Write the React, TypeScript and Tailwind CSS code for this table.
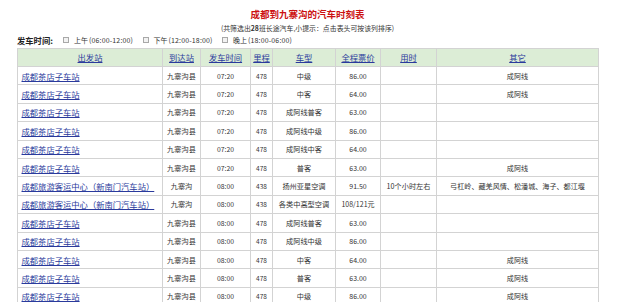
import React from "react";

type Row = {
  from: string;
  to: string;
  time: string;
  km: string;
  type: string;
  price: string;
  dur?: string;
  other?: string;
};

const CDZ = "成都茶店子车站";
const LY = "成都旅游客运中心（新南门汽车站）";

const rows: Row[] = [
  { from: CDZ, to: "九寨沟县", time: "07:20", km: "478", type: "中级", price: "86.00", other: "成阿线" },
  { from: CDZ, to: "九寨沟县", time: "07:20", km: "478", type: "中客", price: "64.00", other: "成阿线" },
  { from: CDZ, to: "九寨沟县", time: "07:20", km: "478", type: "成阿线普客", price: "63.00" },
  { from: CDZ, to: "九寨沟县", time: "07:20", km: "478", type: "成阿线中级", price: "86.00" },
  { from: CDZ, to: "九寨沟县", time: "07:20", km: "478", type: "成阿线中客", price: "64.00" },
  { from: CDZ, to: "九寨沟县", time: "07:20", km: "478", type: "普客", price: "63.00", other: "成阿线" },
  {
    from: LY,
    to: "九寨沟",
    time: "08:00",
    km: "438",
    type: "扬州亚星空调",
    price: "91.50",
    dur: "10个小时左右",
    other: "弓杠岭、藏羌风情、松潘城、海子、都江堰",
  },
  { from: LY, to: "九寨沟", time: "08:00", km: "438", type: "各类中高型空调", price: "108/121元" },
  { from: CDZ, to: "九寨沟县", time: "08:00", km: "478", type: "成阿线普客", price: "63.00" },
  { from: CDZ, to: "九寨沟县", time: "08:00", km: "478", type: "成阿线中级", price: "86.00" },
  { from: CDZ, to: "九寨沟县", time: "08:00", km: "478", type: "中客", price: "64.00", other: "成阿线" },
  { from: CDZ, to: "九寨沟县", time: "08:00", km: "478", type: "普客", price: "63.00", other: "成阿线" },
  { from: CDZ, to: "九寨沟县", time: "08:00", km: "478", type: "中级", price: "86.00", other: "成阿线" },
];

const headers = ["出发站", "到达站", "发车时间", "里程", "车型", "全程票价", "用时", "其它"];

const filters = [
  ["上午", "(06:00-12:00)"],
  ["下午", "(12:00-18:00)"],
  ["晚上", "(18:00-06:00)"],
];

export default function App() {
  return (
    <div
      className="w-[639px] h-[302px] overflow-hidden bg-white text-[#333]"
      style={{ fontFamily: '"Noto Sans CJK SC", "Noto Sans", sans-serif' }}
    >
      <div className="ml-[17px] w-[581px] pt-[9px]">
        <div className="h-[10px] leading-[10px] text-center text-[9.5px] font-bold text-[#cc1111]">
          成都到九寨沟的汽车时刻表
        </div>
        <div className="mt-[4px] h-[10px] leading-[10px] text-center text-[6.9px] text-[#333]">
          (共筛选出<span className="font-bold">28</span>班长途汽车,小提示：点击表头可按该列排序)
        </div>
        <div className="mt-[2px] h-[10px] leading-[10px] flex items-center text-[7px] text-[#333]">
          <span className="font-bold text-[8.3px] text-[#222] w-[46px]">发车时间:</span>
          {filters.map(([a, b]) => (
            <span key={a} className="w-[79.5px] flex items-center whitespace-nowrap">
              <span className="inline-block w-[6px] h-[6px] border border-[#a8a8a8] bg-[#f2f2f2] mr-[5px]" />
              <span>{a}</span>
              <span className="text-[7px] tracking-[0.15px] ml-[1px]">{b}</span>
            </span>
          ))}
        </div>
        <table className="mt-[2.5px] w-[581px] table-fixed border-collapse">
          <colgroup>
            <col className="w-[145px]" />
            <col className="w-[38px]" />
            <col className="w-[50px]" />
            <col className="w-[22px]" />
            <col className="w-[63px]" />
            <col className="w-[45px]" />
            <col className="w-[56px]" />
            <col className="w-[162px]" />
          </colgroup>
          <thead>
            <tr className="h-[18.5px] bg-[#dcedd6]">
              {headers.map((h) => (
                <th
                  key={h}
                  className="border border-[#d3d3d3] p-0 text-center font-normal text-[8.3px] leading-[10px]"
                >
                  <a className="underline text-[#2a3a9c]">{h}</a>
                </th>
              ))}
            </tr>
          </thead>
          <tbody>
            {rows.map((r, i) => (
              <tr key={i} className="h-[18.4px]">
                <td className="border border-[#d3d3d3] pl-[3.5px] text-left text-[8.3px] leading-[10px] whitespace-nowrap overflow-hidden">
                  <a className="underline text-[#2a3a9c]">{r.from}</a>
                </td>
                <td className="border border-[#d3d3d3] p-0 text-center text-[7.2px] leading-[10px]">{r.to}</td>
                <td className="border border-[#d3d3d3] p-0 text-center text-[6.8px] leading-[10px]">{r.time}</td>
                <td className="border border-[#d3d3d3] p-0 text-center text-[6.5px] leading-[10px]">{r.km}</td>
                <td className="border border-[#d3d3d3] p-0 text-center text-[7.2px] leading-[10px] whitespace-nowrap">{r.type}</td>
                <td className="border border-[#d3d3d3] p-0 text-center text-[7px] leading-[10px] whitespace-nowrap">{r.price}</td>
                <td className="border border-[#d3d3d3] p-0 text-center text-[7.2px] leading-[10px] whitespace-nowrap">{r.dur ?? ""}</td>
                <td className="border border-[#d3d3d3] p-0 text-center text-[7.1px] leading-[10px] whitespace-nowrap">{r.other ?? ""}</td>
              </tr>
            ))}
          </tbody>
        </table>
      </div>
    </div>
  );
}
